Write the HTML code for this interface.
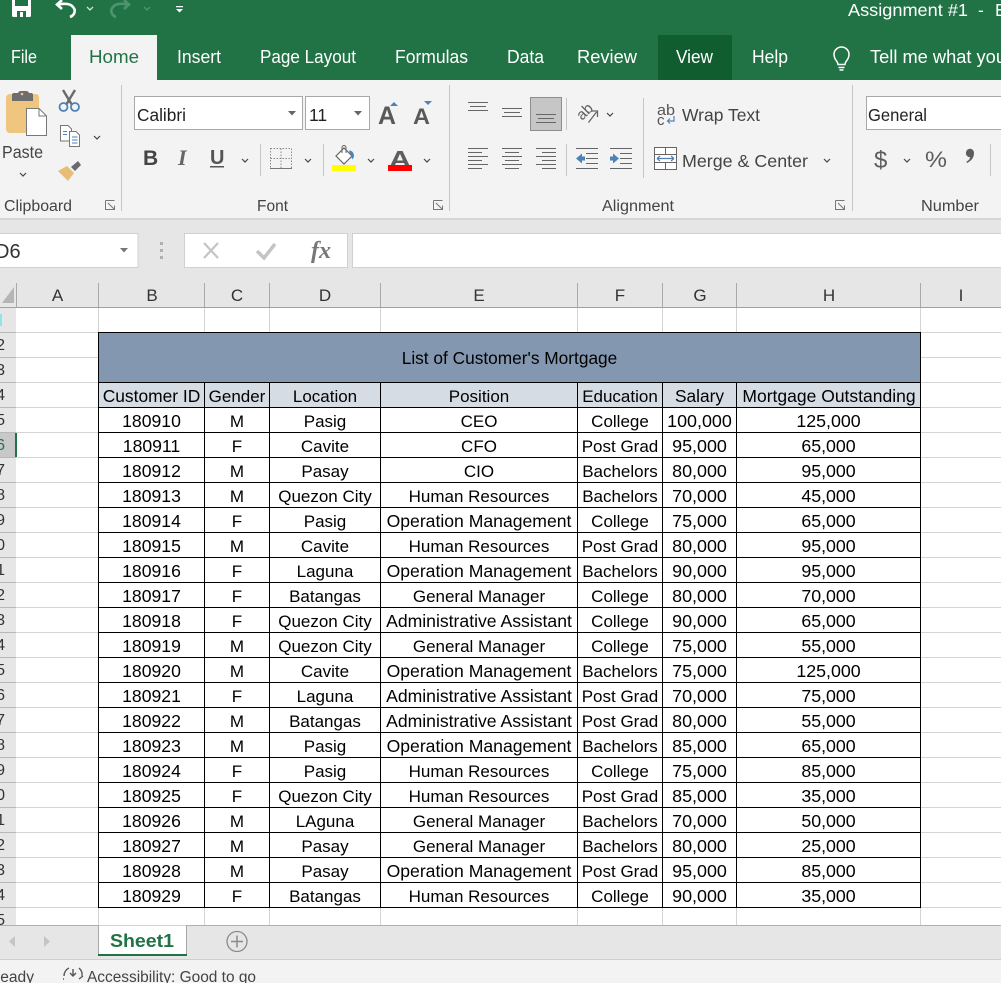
<!DOCTYPE html>
<html><head><meta charset="utf-8">
<style>
html,body{margin:0;padding:0;width:1001px;height:983px;overflow:hidden;background:#fff;font-family:"Liberation Sans",sans-serif;color:#000}
.abs{position:absolute}
#grid{left:0;top:308px;width:1001px;height:617px;background:repeating-linear-gradient(to bottom,#fff 0,#fff 24px,#d4d4d4 24px,#d4d4d4 25px)}
.v{position:absolute;top:308px;height:617px;width:1px;background:#d4d4d4}
#rh{left:0;top:308px;width:17px;height:617px;overflow:hidden}
#rh .bg{position:absolute;left:0;top:0;width:16px;height:617px;background:#e6e6e6}
#rh div{position:absolute;left:-15px;width:20px;height:24px;line-height:26px;text-align:right;font-size:16px;color:#333}
#rh i{position:absolute;left:0;width:16px;height:1px;background:#b8b8b8}
#t{position:absolute;left:98px;top:332px;border-collapse:separate;border-spacing:0;table-layout:fixed;width:823px;font-size:17px}
#t td{box-sizing:border-box;border-right:1px solid #000;border-bottom:1px solid #000;height:25px;padding:3px 0 0;line-height:21px;text-align:center;white-space:nowrap;overflow:visible}
#t td:first-child{border-left:1px solid #000}
#t td:nth-child(1),#t td:nth-child(6),#t td:nth-child(7),#t td.w{padding:2px 0 0;line-height:22px}
#t td:nth-child(1){font-size:17.6px}
#t td.w{font-size:17.6px}
#t td:nth-child(6){font-size:17.9px}
#t td:nth-child(7){font-size:17.8px}
#t tr.h td:nth-child(1){font-size:17.4px}
#t tr.h td:nth-child(6){font-size:17.3px}
#t tr.h td:nth-child(7){font-size:17.5px;padding-left:1px}
#t tr:first-child td{border-top:1px solid #000;height:51px;background:#8497b0;line-height:47px;padding:2px 0 0;font-size:17.3px}
#t tr.h td{background:#d6dce4}
svg text{font-family:"Liberation Sans",sans-serif}
svg text.serif{font-family:"Liberation Serif",serif}
</style></head><body>

<div class="abs" id="grid"></div>
<div class="v" style="left:98px"></div><div class="v" style="left:204px"></div><div class="v" style="left:269px"></div><div class="v" style="left:380px"></div><div class="v" style="left:577px"></div><div class="v" style="left:662px"></div><div class="v" style="left:736px"></div><div class="v" style="left:920px"></div>

<table id="t">
<colgroup><col style="width:107px"><col style="width:65px"><col style="width:111px"><col style="width:197px"><col style="width:85px"><col style="width:74px"><col style="width:184px"></colgroup>
<tr><td colspan="7">List of Customer's Mortgage</td></tr>
<tr class="h"><td>Customer ID</td><td>Gender</td><td>Location</td><td>Position</td><td>Education</td><td>Salary</td><td>Mortgage Outstanding</td></tr>
<tr><td>180910</td><td>M</td><td>Pasig</td><td>CEO</td><td>College</td><td>100,000</td><td>125,000</td></tr>
<tr><td>180911</td><td>F</td><td>Cavite</td><td>CFO</td><td>Post Grad</td><td>95,000</td><td>65,000</td></tr>
<tr><td>180912</td><td>M</td><td>Pasay</td><td>CIO</td><td>Bachelors</td><td>80,000</td><td>95,000</td></tr>
<tr><td>180913</td><td>M</td><td>Quezon City</td><td>Human Resources</td><td>Bachelors</td><td>70,000</td><td>45,000</td></tr>
<tr><td>180914</td><td>F</td><td>Pasig</td><td class="w">Operation Management</td><td>College</td><td>75,000</td><td>65,000</td></tr>
<tr><td>180915</td><td>M</td><td>Cavite</td><td>Human Resources</td><td>Post Grad</td><td>80,000</td><td>95,000</td></tr>
<tr><td>180916</td><td>F</td><td>Laguna</td><td class="w">Operation Management</td><td>Bachelors</td><td>90,000</td><td>95,000</td></tr>
<tr><td>180917</td><td>F</td><td>Batangas</td><td>General Manager</td><td>College</td><td>80,000</td><td>70,000</td></tr>
<tr><td>180918</td><td>F</td><td>Quezon City</td><td class="w">Administrative Assistant</td><td>College</td><td>90,000</td><td>65,000</td></tr>
<tr><td>180919</td><td>M</td><td>Quezon City</td><td>General Manager</td><td>College</td><td>75,000</td><td>55,000</td></tr>
<tr><td>180920</td><td>M</td><td>Cavite</td><td class="w">Operation Management</td><td>Bachelors</td><td>75,000</td><td>125,000</td></tr>
<tr><td>180921</td><td>F</td><td>Laguna</td><td class="w">Administrative Assistant</td><td>Post Grad</td><td>70,000</td><td>75,000</td></tr>
<tr><td>180922</td><td>M</td><td>Batangas</td><td class="w">Administrative Assistant</td><td>Post Grad</td><td>80,000</td><td>55,000</td></tr>
<tr><td>180923</td><td>M</td><td>Pasig</td><td class="w">Operation Management</td><td>Bachelors</td><td>85,000</td><td>65,000</td></tr>
<tr><td>180924</td><td>F</td><td>Pasig</td><td>Human Resources</td><td>College</td><td>75,000</td><td>85,000</td></tr>
<tr><td>180925</td><td>F</td><td>Quezon City</td><td>Human Resources</td><td>Post Grad</td><td>85,000</td><td>35,000</td></tr>
<tr><td>180926</td><td>M</td><td>LAguna</td><td>General Manager</td><td>Bachelors</td><td>70,000</td><td>50,000</td></tr>
<tr><td>180927</td><td>M</td><td>Pasay</td><td>General Manager</td><td>Bachelors</td><td>80,000</td><td>25,000</td></tr>
<tr><td>180928</td><td>M</td><td>Pasay</td><td class="w">Operation Management</td><td>Post Grad</td><td>95,000</td><td>85,000</td></tr>
<tr><td>180929</td><td>F</td><td>Batangas</td><td>Human Resources</td><td>College</td><td>90,000</td><td>35,000</td></tr>
</table>

<div class="abs" id="rh">
<span class="bg"></span>
<span class="abs" style="left:0;top:6px;width:2px;height:12px;background:#8fe6e6"></span>
<i style="top:24px"></i><i style="top:49px"></i><i style="top:74px"></i><i style="top:99px"></i><i style="top:124px"></i><i style="top:149px"></i><i style="top:174px"></i><i style="top:199px"></i><i style="top:224px"></i><i style="top:249px"></i><i style="top:274px"></i><i style="top:299px"></i><i style="top:324px"></i><i style="top:349px"></i><i style="top:374px"></i><i style="top:399px"></i><i style="top:424px"></i><i style="top:449px"></i><i style="top:474px"></i><i style="top:499px"></i><i style="top:524px"></i><i style="top:549px"></i><i style="top:574px"></i><i style="top:599px"></i>
<span class="abs" style="left:0;top:125px;width:15px;height:24px;background:#c8c8c8"></span>
<span class="abs" style="left:15px;top:125px;width:2px;height:24px;background:#217346"></span>
<div style="top:25px">2</div><div style="top:50px">3</div><div style="top:75px">4</div><div style="top:100px">5</div><div style="top:125px;color:#217346">6</div><div style="top:150px">7</div><div style="top:175px">8</div><div style="top:200px">9</div><div style="top:225px">10</div><div style="top:250px">11</div><div style="top:275px">12</div><div style="top:300px">13</div><div style="top:325px">14</div><div style="top:350px">15</div><div style="top:375px">16</div><div style="top:400px">17</div><div style="top:425px">18</div><div style="top:450px">19</div><div style="top:475px">20</div><div style="top:500px">21</div><div style="top:525px">22</div><div style="top:550px">23</div><div style="top:575px">24</div><div style="top:600px">25</div>
</div>

<svg class="abs" style="left:0;top:0" width="1001" height="308" viewBox="0 0 1001 308">
<rect width="1001" height="80" fill="#217346"/>
<rect x="71" y="35" width="86" height="45" fill="#f3f3f3"/>
<rect x="658" y="35" width="74" height="45" fill="#105e30"/>
<rect y="80" width="1001" height="138" fill="#f3f3f3"/>
<rect y="218" width="1001" height="2" fill="#d6d6d6"/>
<rect y="220" width="1001" height="62" fill="#e6e6e6"/>
<rect y="282" width="1001" height="25" fill="#e6e6e6"/>
<rect y="307" width="1001" height="1" fill="#a0a0a0"/>

<!-- QAT -->
<path d="M12 0V15.5a1.5 1.5 0 0 0 1.5 1.5H29.500a1.500 1.500 0 0 0 1.500-1.500V0Z" fill="#fff"/>
<rect x="15" y="0" width="13" height="6" fill="#217346"/><rect x="17" y="11" width="9" height="6" fill="#217346"/><rect x="20" y="12" width="3" height="5" fill="#fff"/>
<path d="M70 17C75 15 76 10 73 7 71 4 66 3 58 4.500M62 0 57 4.500 62 9" fill="none" stroke="#fff" stroke-width="2.600"/>
<path d="M87 7l3 3 3-3" fill="none" stroke="#cfe3d8" stroke-width="1.300"/>
<path d="M116 17C111 15 110 10 113 7 115 4 120 3 128 4.500M124 0 129 4.500 124 9" fill="none" stroke="#4f9470" stroke-width="2.600"/>
<path d="M144 7l3 3 3-3" fill="none" stroke="#4f9470" stroke-width="1.300"/>
<path d="M176 6h7v1.300h-7zM176 9h7l-3.500 3.500z" fill="#fff"/>
<text x="848" y="16" font-size="17.500" fill="#fff" textLength="120" lengthAdjust="spacingAndGlyphs">Assignment #1</text>
<text x="978" y="16" font-size="17.500" fill="#fff">-</text><text x="995" y="16" font-size="17.500" fill="#fff">E</text>

<!-- Tabs -->
<g font-size="18" fill="#fff">
<text x="11" y="63" textLength="26" lengthAdjust="spacingAndGlyphs">File</text>
<text x="89" y="63" fill="#217346" textLength="50" lengthAdjust="spacingAndGlyphs">Home</text>
<text x="177" y="63" textLength="44" lengthAdjust="spacingAndGlyphs">Insert</text>
<text x="260" y="63" textLength="96" lengthAdjust="spacingAndGlyphs">Page Layout</text>
<text x="395" y="63" textLength="73" lengthAdjust="spacingAndGlyphs">Formulas</text>
<text x="507" y="63" textLength="37" lengthAdjust="spacingAndGlyphs">Data</text>
<text x="577" y="63" textLength="60" lengthAdjust="spacingAndGlyphs">Review</text>
<text x="676" y="63" textLength="37" lengthAdjust="spacingAndGlyphs">View</text>
<text x="752" y="63" textLength="36" lengthAdjust="spacingAndGlyphs">Help</text>
<text x="870" y="63" textLength="136" lengthAdjust="spacingAndGlyphs">Tell me what you</text>
</g>
<path d="M838 64.500C838 61 834 60 834 54.500a7.500 7.500 0 0 1 15 0C849 60 845 61 845 64.500ZM838.500 67.500h6M839.500 70h4" fill="none" stroke="#fff" stroke-width="1.500"/>

<!-- Clipboard -->
<path d="M6 98a4 4 0 0 1 4-4H36a3 3 0 0 1 3 3V133H10a4 4 0 0 1-4-4Z" fill="#efc57f"/>
<path d="M12 97V95a2 2 0 0 1 2-2H18a3 3 0 0 1 3-2H26a3 3 0 0 1 3 2H31a2 2 0 0 1 2 2V101H12Z" fill="#6d6d6d"/>
<circle cx="22" cy="94" r="1.300" fill="#efc57f"/>
<path d="M26.500 108.500H39L46.500 116V135.500H26.500Z" fill="#fff" stroke="#777" stroke-width="1"/>
<path d="M39 108.500V116H46.500" fill="none" stroke="#777"/>
<text x="2" y="158" font-size="17.500" fill="#444" textLength="41" lengthAdjust="spacingAndGlyphs">Paste</text>
<path d="M20 173l3 3 3-3" fill="none" stroke="#444" stroke-width="1.200"/>
<path d="M63 90 72 105M75 90 66 105" stroke="#6a6a6a" stroke-width="2.400"/>
<circle cx="63.500" cy="107" r="4" fill="none" stroke="#4d82b8" stroke-width="1.800"/><circle cx="75" cy="107" r="4" fill="none" stroke="#4d82b8" stroke-width="1.800"/>
<path d="M60.500 125.500H68L71.500 129V141H60.500Z" fill="#fff" stroke="#777"/>
<path d="M69.500 131.500H76L79.500 135V146.500H69.500Z" fill="#fff" stroke="#777"/>
<path d="M72 137h5.500M72 140h5.500M72 143h5.500" stroke="#4d82b8"/>
<path d="M63 131.500h4M63 134.500h4" stroke="#4d82b8"/>
<path d="M94 136l3 3 3-3" fill="none" stroke="#444" stroke-width="1.200"/>
<path d="M58 171 67 166 74 173 68 181Z" fill="#e8bd78"/>
<path d="M71 167 78 161 81 165 75 171Z" fill="#6a6a6a"/>
<text x="4" y="211" font-size="15.500" fill="#444" textLength="68" lengthAdjust="spacingAndGlyphs">Clipboard</text>
<path d="M105.500 200.500h9M105.500 200.500v9h9M108 203l6 6M110.500 209.500h4v-4" fill="none" stroke="#777"/>
<rect x="121" y="85" width="1" height="126" fill="#c6c6c6"/>

<!-- Font -->
<rect x="134.500" y="96.500" width="168" height="33" fill="#fff" stroke="#a8a8a8"/>
<rect x="305.500" y="96.500" width="64" height="33" fill="#fff" stroke="#a8a8a8"/>
<text x="137" y="121" font-size="17.500" fill="#222" textLength="49" lengthAdjust="spacingAndGlyphs">Calibri</text>
<text x="309" y="121" font-size="17.500" fill="#222">11</text>
<path d="M288 111h8l-4 4.500zM354 111h8l-4 4.500z" fill="#666"/>
<text x="378" y="124" font-size="25" font-weight="bold" fill="#595959" textLength="18" lengthAdjust="spacingAndGlyphs">A</text>
<path d="M390 106l4-4 4 4z" fill="#4d82b8"/>
<text x="413" y="124" font-size="22" font-weight="bold" fill="#595959" textLength="17" lengthAdjust="spacingAndGlyphs">A</text>
<path d="M424 101h8l-4 4z" fill="#4d82b8"/>
<text x="143" y="165" font-size="21" font-weight="bold" fill="#444">B</text>
<text x="178" y="165" class="serif" font-size="22" font-weight="bold" font-style="italic" fill="#666">I</text>
<text x="210" y="164" font-size="20" font-weight="bold" fill="#555">U</text>
<rect x="210" y="166" width="14" height="1.500" fill="#555"/>
<path d="M242 159l3 3 3-3M305 159l3 3 3-3M368 159l3 3 3-3M424 159l3 3 3-3" fill="none" stroke="#444" stroke-width="1.200"/>
<rect x="260" y="144" width="1" height="32" fill="#c6c6c6"/><rect x="323" y="144" width="1" height="32" fill="#c6c6c6"/>
<path d="M270.500 148.500h21v20h-21zM281 148.500v20M270.500 158.500h21" fill="none" stroke="#8a8a8a" stroke-dasharray="1.500 1.500"/>
<rect x="270" y="168" width="22" height="1" fill="#777"/>
<path d="M336 156 344 148 352 156 344 164Z" fill="#fff" stroke="#666" stroke-width="1.200"/>
<path d="M342 153V147.500a2 2 0 0 1 4 0V153" fill="none" stroke="#666"/>
<path d="M349 150.500c3 0 5 2 5 6l-1.500 3-1.500-3Z" fill="#4d82b8"/>
<rect x="332" y="165" width="24" height="6" fill="#ffff00"/>
<text x="389" y="167" font-size="23" font-weight="bold" fill="#5d5d5d" textLength="22" lengthAdjust="spacingAndGlyphs">A</text>
<rect x="388" y="165" width="24" height="6" fill="#ff0000"/>
<text x="257" y="211" font-size="15.500" fill="#444" textLength="31" lengthAdjust="spacingAndGlyphs">Font</text>
<path d="M433.500 200.500h9M433.500 200.500v9h9M436 203l6 6M438.500 209.500h4v-4" fill="none" stroke="#777"/>
<rect x="449" y="85" width="1" height="126" fill="#c6c6c6"/>

<!-- Alignment -->
<g stroke="#666" stroke-width="1" fill="none">
<path d="M468 102.500h20M470 106.500h16M468 110.500h20"/>
<path d="M502 108.500h20M504 112.500h16M502 116.500h20"/>
</g>
<rect x="530.500" y="97.500" width="31" height="33" fill="#c6c6c6" stroke="#8d8d8d"/>
<path d="M536 114.500h20M538 118.500h16M536 122.500h20" stroke="#666" fill="none"/>
<rect x="566" y="98" width="1" height="32" fill="#c6c6c6"/>
<g transform="rotate(-45 585 111)"><text x="576" y="116" font-size="15" fill="#5d5d5d">ab</text></g>
<path d="M588.500 122.500 596.500 112M591.500 111h6v6" stroke="#666" stroke-width="1.300" fill="none"/>
<path d="M607 113l3 3 3-3M824 159l3 3 3-3M904 159l3 3 3-3" fill="none" stroke="#444" stroke-width="1.200"/>
<g stroke="#666" fill="none">
<path d="M468 148.500h20M468 152.500h14M468 156.500h20M468 160.500h14M468 164.500h20M468 168.500h14"/>
<path d="M502 148.500h20M505 152.500h14M502 156.500h20M505 160.500h14M502 164.500h20M505 168.500h14"/>
<path d="M536 148.500h20M542 152.500h14M536 156.500h20M542 160.500h14M536 164.500h20M542 168.500h14"/>
<path d="M576 148.500h22M586 153.500h12M586 158.500h12M586 163.500h12M576 168.500h22"/>
<path d="M610 148.500h22M620 153.500h12M620 158.500h12M620 163.500h12M610 168.500h22"/>
</g>
<path d="M576 158.500 582 153.500V156.500H585V160.500H582V163.500Z" fill="#4d82b8"/>
<path d="M619 158.500 613 153.500V156.500H610V160.500H613V163.500Z" fill="#4d82b8"/>
<rect x="566" y="144" width="1" height="32" fill="#c6c6c6"/>
<rect x="643" y="98" width="1" height="80" fill="#c6c6c6"/>
<text x="657" y="115" font-size="15" fill="#555" textLength="18" lengthAdjust="spacingAndGlyphs">ab</text>
<text x="657" y="125" font-size="15" fill="#555">c</text>
<path d="M674 116v5h-6M670 118.500l-2.500 2.500 2.500 2.500" fill="none" stroke="#4d82b8" stroke-width="1.200"/>
<text x="682" y="121" font-size="17.500" fill="#444" textLength="78" lengthAdjust="spacingAndGlyphs">Wrap Text</text>
<path d="M654.500 147.500h22v22h-22zM654.500 154.500h22M654.500 162.500h22M665.500 147.500v7M665.500 162.500v7" fill="#fff" stroke="#666"/>
<path d="M657 158.500h17M657 158.500l3-2.500M657 158.500l3 2.500M674 158.500l-3-2.500M674 158.500l-3 2.500" fill="none" stroke="#4d82b8" stroke-width="1.200"/>
<text x="682" y="167" font-size="17.500" fill="#444" textLength="126" lengthAdjust="spacingAndGlyphs">Merge &amp; Center</text>
<text x="602" y="211" font-size="15.500" fill="#444" textLength="72" lengthAdjust="spacingAndGlyphs">Alignment</text>
<path d="M835.500 200.500h9M835.500 200.500v9h9M838 203l6 6M840.500 209.500h4v-4" fill="none" stroke="#777"/>
<rect x="852" y="85" width="1" height="126" fill="#c6c6c6"/>

<!-- Number -->
<rect x="866.500" y="96.500" width="140" height="33" fill="#fff" stroke="#a8a8a8"/>
<text x="868" y="121" font-size="17.500" fill="#222" textLength="59" lengthAdjust="spacingAndGlyphs">General</text>
<text x="874" y="168" font-size="24" fill="#5d5d5d">$</text>
<text x="925" y="167" font-size="22" fill="#5d5d5d" textLength="22" lengthAdjust="spacingAndGlyphs">%</text>
<path d="M966 152.500a4 4 0 0 1 8 .5c0 5-3 8-7 10l-.7-1.300c2-1 3.500-2.500 4-4.500a4 4 0 0 1-4.300-4.700Z" fill="#5d5d5d"/>
<rect x="990" y="144" width="1" height="32" fill="#c6c6c6"/>
<text x="921" y="211" font-size="15.500" fill="#444" textLength="58" lengthAdjust="spacingAndGlyphs">Number</text>

<!-- Formula bar -->
<rect x="-1" y="233.500" width="139" height="34" fill="#fff" stroke="#d0d0d0"/>
<text x="-5" y="258" font-size="20" fill="#333">D6</text>
<path d="M120 248h8l-4 4.500z" fill="#777"/>
<path d="M160 242h3v3h-3zM160 249h3v3h-3zM160 256h3v3h-3z" fill="#b0b0b0"/>
<rect x="184.500" y="233.500" width="163" height="34" fill="#fff" stroke="#d0d0d0"/>
<path d="M204 243 218 258M218 243 204 258" stroke="#c4c4c4" stroke-width="2.200"/>
<path d="M257 251 264 258 275 244" fill="none" stroke="#c4c4c4" stroke-width="3.500"/>
<text x="311" y="258" class="serif" font-size="24" font-style="italic" font-weight="bold" fill="#777">fx</text>
<rect x="352.500" y="233.500" width="660" height="34" fill="#fff" stroke="#d0d0d0"/>

<!-- Column headers -->
<path d="M2 303 14 287V303Z" fill="#b5b5b5"/>
<g fill="#a9a9a9"><rect x="16" y="283" width="1" height="24"/><rect x="98" y="283" width="1" height="24"/><rect x="204" y="283" width="1" height="24"/><rect x="269" y="283" width="1" height="24"/><rect x="380" y="283" width="1" height="24"/><rect x="577" y="283" width="1" height="24"/><rect x="662" y="283" width="1" height="24"/><rect x="736" y="283" width="1" height="24"/><rect x="920" y="283" width="1" height="24"/></g>
<g font-size="17" fill="#333" text-anchor="middle">
<text x="57.500" y="301">A</text><text x="152" y="301">B</text><text x="237" y="301">C</text><text x="325" y="301">D</text><text x="479" y="301">E</text><text x="620" y="301">F</text><text x="700" y="301">G</text><text x="829" y="301">H</text><text x="961" y="301">I</text>
</g>
</svg>

<svg class="abs" style="left:0;top:925px" width="1001" height="58" viewBox="0 925 1001 58">
<rect y="925" width="1001" height="34" fill="#e6e6e6"/>
<rect y="925" width="1001" height="1" fill="#b0b0b0"/>
<rect y="959" width="1001" height="1" fill="#cfcfcf"/>
<rect y="960" width="1001" height="23" fill="#f3f3f3"/>
<path d="M15 936 9 941.500 15 947Z" fill="#c4c4c4"/>
<path d="M44 936 50 941.500 44 947Z" fill="#c4c4c4"/>
<path d="M98.500 956V925.500L99 925H186.500V955" fill="#fff" stroke="#a8a8a8"/>
<rect x="98" y="954" width="89" height="2" fill="#217346"/>
<text x="110" y="947" font-size="18" font-weight="bold" fill="#217346" textLength="64" lengthAdjust="spacingAndGlyphs">Sheet1</text>
<circle cx="237" cy="941.500" r="10" fill="none" stroke="#8a8a8a" stroke-width="1.300"/>
<path d="M237 935.500v12M231 941.500h12" stroke="#8a8a8a" stroke-width="1.500"/>
<text x="-11" y="982" font-size="15.500" fill="#444" textLength="45" lengthAdjust="spacingAndGlyphs">Ready</text>
<path d="M64 976a9 9 0 0 1 5-8M79 968a9 9 0 0 1 3 8M73 969v7M70 973l3 3 3-3M64 979h-1M79 979l4-3" fill="none" stroke="#555" stroke-width="1.400"/>
<text x="87" y="982" font-size="15.500" fill="#444" textLength="169" lengthAdjust="spacingAndGlyphs">Accessibility: Good to go</text>
</svg>

</body></html>
